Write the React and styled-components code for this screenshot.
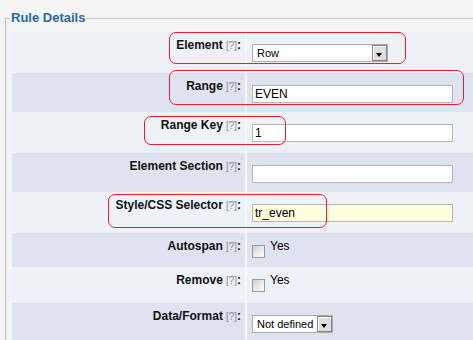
import React from 'react';
import styled, { createGlobalStyle } from 'styled-components';

const GlobalStyle = createGlobalStyle`
    html, body {
        margin: 0;
        padding: 0;
        background: #f4f4f4;
        font-family: "Liberation Sans", Arial, sans-serif;
        overflow: hidden;
    }
`;

const Page = styled.div`
    position: relative;
    width: 473px;
    height: 340px;
    overflow: hidden;
`;

const Fieldset = styled.fieldset`
    margin: 10px 0 0 5px;
    padding: 6px 0 0 6px;
    border: none;
    border-top: 1px solid #c9c9c9;
    border-left: 1px solid #c4c4c4;
    min-width: 0;
`;

const Legend = styled.legend`
    margin-left: -2px;
    padding: 0 1px;
    font-size: 13px;
    line-height: 16px;
    font-weight: bold;
    color: #2b6aa1;
`;

const Row = styled.div`
    display: grid;
    grid-template-columns: 235px 1fr;
    height: ${(p) => p.$h}px;
    background: ${(p) => (p.$alt ? '#dde4ef' : '#eef1f8')};
`;

const Label = styled.div`
    padding: 6px 4px 0 0;
    border-right: 2px solid #f7f8fa;
    text-align: right;
    font-size: 12px;
    line-height: 14px;
    font-weight: bold;
    color: #111;
    white-space: nowrap;
`;

const Help = styled.span`
    font-size: 10px;
    font-weight: normal;
    color: #8c8c8c;
    margin-left: 3px;
`;

const Value = styled.div`
    padding: 12px 0 0 5px;
    font-size: 11px;
    color: #000;
`;

const TextInput = styled.div`
    box-sizing: border-box;
    width: 201px;
    height: 18px;
    padding: 0 2px;
    border: 1px solid #b3b6ba;
    background: ${(p) => p.$bg || '#fff'};
    font-size: 12px;
    line-height: 16px;
`;

const SelectBox = styled.div`
    box-sizing: border-box;
    display: flex;
    align-items: center;
    width: ${(p) => p.$w}px;
    height: 18px;
    border: 1px solid #a8adb3;
    background: #fff;
    font-size: 11px;
`;

const SelectText = styled.span`
    flex: 1;
    padding-left: 4px;
    line-height: 16px;
    white-space: nowrap;
    overflow: hidden;
`;

const ArrowButton = styled.span`
    box-sizing: border-box;
    position: relative;
    flex: none;
    width: 15px;
    height: 16px;
    border: 1px solid #858585;
    box-shadow: inset 1px 1px 0 #fff;
    background: #dedede;

    &::after {
        content: '';
        position: absolute;
        left: 3px;
        top: 7px;
        border-left: 3.5px solid transparent;
        border-right: 3.5px solid transparent;
        border-top: 4px solid #000;
    }
`;

const CheckLine = styled.div`
    display: flex;
    align-items: flex-start;
    gap: 5px;
`;

const Checkbox = styled.span`
    box-sizing: border-box;
    width: 13px;
    height: 13px;
    border: 1px solid #9a9a9a;
    background: linear-gradient(135deg, #d2d2d2, #f6f6f6 80%);
`;

const CheckText = styled.span`
    margin-top: -6px;
    font-size: 12px;
    line-height: 14px;
`;

const Callout = styled.div`
    position: absolute;
    box-sizing: border-box;
    left: ${(p) => p.$x}px;
    top: ${(p) => p.$y}px;
    width: ${(p) => p.$w}px;
    height: ${(p) => p.$h}px;
    border: 1.5px solid #ee1c24;
    border-radius: 7px;
    pointer-events: none;
`;

const rows = [
    { label: 'Element', h: 41, kind: 'select', value: 'Row', w: 136 },
    { label: 'Range', h: 39, kind: 'text', value: 'EVEN' },
    { label: 'Range Key', h: 41, kind: 'text', value: '1' },
    { label: 'Element Section', h: 39, kind: 'text', value: '' },
    { label: 'Style/CSS Selector', h: 41, kind: 'text', value: 'tr_even', bg: '#ffffdf' },
    { label: 'Autospan', h: 34, kind: 'check' },
    { label: 'Remove', h: 36, kind: 'check' },
    { label: 'Data/Format', h: 40, kind: 'select', value: 'Not defined', w: 81 },
];

const callouts = [
    { x: 169, y: 32, w: 237, h: 32 },
    { x: 169, y: 70, w: 295, h: 35 },
    { x: 144, y: 116, w: 142, h: 29 },
    { x: 108, y: 194, w: 219, h: 34 },
];

const Control = ({ row }) => {
    if (row.kind === 'select') {
        return (
            <SelectBox $w={row.w}>
                <SelectText>{row.value}</SelectText>
                <ArrowButton />
            </SelectBox>
        );
    }
    if (row.kind === 'check') {
        return (
            <CheckLine>
                <Checkbox />
                <CheckText>Yes</CheckText>
            </CheckLine>
        );
    }
    return <TextInput $bg={row.bg}>{row.value}</TextInput>;
};

const App = () => {
    return (
        <Page>
            <GlobalStyle />
            <Fieldset>
                <Legend>Rule Details</Legend>
                {rows.map((row, i) => (
                    <Row key={row.label} $h={row.h} $alt={i % 2 === 1}>
                        <Label>
                            {row.label}
                            <Help>[?]</Help>:
                        </Label>
                        <Value>
                            <Control row={row} />
                        </Value>
                    </Row>
                ))}
            </Fieldset>
            {callouts.map((c, i) => (
                <Callout key={i} $x={c.x} $y={c.y} $w={c.w} $h={c.h} />
            ))}
        </Page>
    );
};

export default App;
